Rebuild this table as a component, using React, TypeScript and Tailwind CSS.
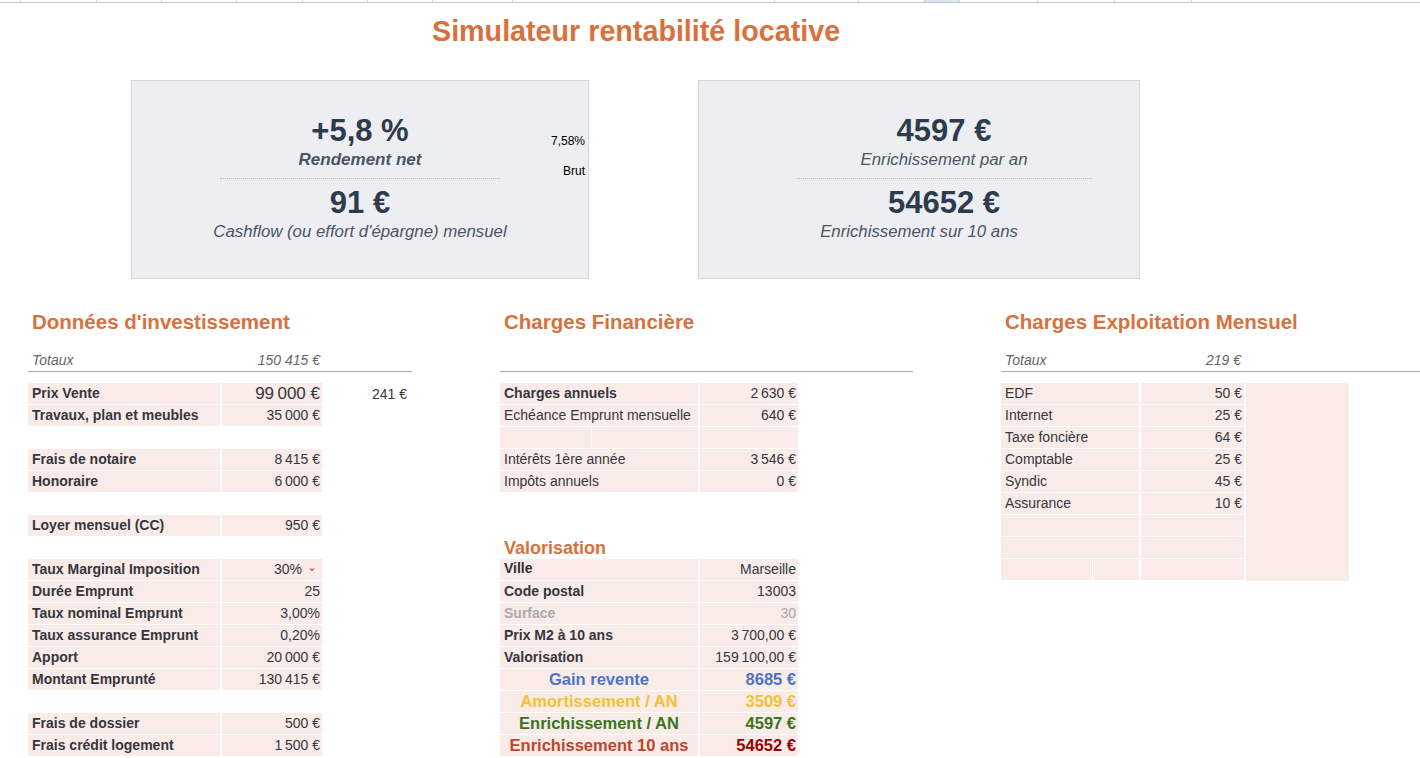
import React from 'react'

type Cell = { label?: string; value?: string; bold?: boolean; big?: boolean; muted?: boolean; split?: boolean; arrow?: boolean }

const pink = 'bg-[#f9ebe7]'

function Row({ row, lw, vw }: { row: Cell; lw: string; vw: string }) {
  if (!row.label && !row.value && !row.split) return <div className="h-[22px]" />
  return (
    <div className="flex h-[22px] border-b border-white">
      <div className={`${lw} ${pink} flex items-center border-r-2 border-white pl-1 ${row.bold ? 'font-bold' : ''} ${row.muted ? 'text-[#aaaaaa]' : 'text-[#34373e]'}`}>
        {row.split ? <div className="h-full w-[88px] border-r border-white" /> : row.label}
      </div>
      <div className={`${vw} ${pink} flex items-center justify-end pr-[2px] ${row.big ? 'text-[17px]' : ''} ${row.muted ? 'text-[#aaaaaa]' : 'text-[#34373e]'}`}>
        {row.value}
        {row.arrow && (
          <svg className="ml-[6px] mr-[4px]" width="8" height="6" viewBox="0 0 8 6">
            <path d="M1 1.5 L7 1.5 L4 4.5 Z" fill="#e0705a" />
          </svg>
        )}
      </div>
    </div>
  )
}

const investissement: Cell[] = [
  { label: 'Prix Vente', value: '99\u202f000 €', bold: true, big: true },
  { label: 'Travaux, plan et meubles', value: '35\u202f000 €', bold: true },
  {},
  { label: 'Frais de notaire', value: '8\u202f415 €', bold: true },
  { label: 'Honoraire', value: '6\u202f000 €', bold: true },
  {},
  { label: 'Loyer mensuel (CC)', value: '950 €', bold: true },
  {},
  { label: 'Taux Marginal Imposition', value: '30%', bold: true, arrow: true },
  { label: 'Durée Emprunt', value: '25', bold: true },
  { label: 'Taux nominal Emprunt', value: '3,00%', bold: true },
  { label: 'Taux assurance Emprunt', value: '0,20%', bold: true },
  { label: 'Apport', value: '20\u202f000 €', bold: true },
  { label: 'Montant Emprunté', value: '130\u202f415 €', bold: true },
  {},
  { label: 'Frais de dossier', value: '500 €', bold: true },
  { label: 'Frais crédit logement', value: '1\u202f500 €', bold: true },
]

const financiere: Cell[] = [
  { label: 'Charges annuels', value: '2\u202f630 €', bold: true },
  { label: 'Echéance Emprunt mensuelle', value: '640 €' },
  { split: true },
  { label: 'Intérêts 1ère année', value: '3\u202f546 €' },
  { label: 'Impôts annuels', value: '0 €' },
]

const valorisation: Cell[] = [
  { label: 'Code postal', value: '13003', bold: true },
  { label: 'Surface', value: '30', bold: true, muted: true },
  { label: 'Prix M2 à 10 ans', value: '3\u202f700,00 €', bold: true },
  { label: 'Valorisation', value: '159\u202f100,00 €', bold: true },
]

const resultats = [
  { label: 'Gain revente', value: '8685 €', color: 'text-[#4a74c9]', vcolor: 'text-[#4a74c9]' },
  { label: 'Amortissement / AN', value: '3509 €', color: 'text-[#f1c232]', vcolor: 'text-[#f1c232]' },
  { label: 'Enrichissement / AN', value: '4597 €', color: 'text-[#38761d]', vcolor: 'text-[#38761d]' },
  { label: 'Enrichissement 10 ans', value: '54652 €', color: 'text-[#c0442b]', vcolor: 'text-[#990000]' },
]

const exploitation: Cell[] = [
  { label: 'EDF', value: '50 €' },
  { label: 'Internet', value: '25 €' },
  { label: 'Taxe foncière', value: '64 €' },
  { label: 'Comptable', value: '25 €' },
  { label: 'Syndic', value: '45 €' },
  { label: 'Assurance', value: '10 €' },
  { label: ' ', value: '' },
  { label: ' ', value: '' },
  { split: true },
]

function SectionHead({ title, total, lw, vw, lineW }: { title: string; total?: string; lw: string; vw: string; lineW: string }) {
  return (
    <div>
      <h2 className="h-[28px] whitespace-nowrap pl-1 text-[20.5px] font-bold leading-[28px] text-[#d9713c]">{title}</h2>
      <div className={`mt-[13px] flex h-[23px] items-center border-b border-[#a8a8a8] italic text-[#666] ${lineW}`}>
        {total && (
          <>
            <div className={`${lw} pl-1`}>Totaux</div>
            <div className={`${vw} pr-[2px] text-right`}>{total}</div>
          </>
        )}
      </div>
    </div>
  )
}

export default function App() {
  return (
    <div className="relative h-[758px] w-[1420px] overflow-hidden bg-white font-['Liberation_Sans',Arial,sans-serif] text-[14px]">
      {/* spreadsheet header edge */}
      <div className="flex h-[3px] border-b border-[#c4c4c4]">
        {[21, 76, 65, 75, 66, 65, 65, 80, 262, 84, 66, 35, 78, 77, 77].map((w, i) => (
          <div key={i} style={{ width: w }} className={`h-full border-r border-[#d4d4d4] ${i === 11 ? 'bg-[#dbe6f3]' : ''}`} />
        ))}
      </div>

      <h1 className="mt-[13px] whitespace-nowrap pl-[432px] text-[28.7px] font-bold leading-[30px] text-[#d9713c]">
        Simulateur rentabilité locative
      </h1>

      <div className="mt-[34px] flex">
        <div className="relative ml-[131px] flex h-[199px] w-[458px] flex-col items-center border border-[#d6d6d6] bg-[#eceef1] pt-[32px] text-[#2e3b4e]">
          <div className="text-[31px] font-bold leading-[36px]">+5,8 %</div>
          <div className="text-[17px] font-bold italic leading-[22px] text-[#4a5566]">Rendement net</div>
          <div className="mt-[7px] w-[280px] border-t border-dotted border-[#b5b8bd]" />
          <div className="mt-[6px] text-[31px] font-bold leading-[36px]">91 €</div>
          <div className="text-[16.8px] italic leading-[22px] text-[#4a5566]">Cashflow (ou effort d'épargne) mensuel</div>
          <div className="absolute right-[3px] top-[51px] text-[12px] text-black">7,58%</div>
          <div className="absolute right-[3px] top-[81px] text-[12px] text-black">Brut</div>
        </div>

        <div className="ml-[109px] flex h-[199px] w-[442px] flex-col items-center border border-[#d6d6d6] bg-[#eceef1] pt-[32px] text-[#2e3b4e]">
          <div className="flex flex-col items-center pl-[50px]">
            <div className="text-[31px] font-bold leading-[36px]">4597 €</div>
            <div className="text-[16.8px] italic leading-[22px] text-[#4a5566]">Enrichissement par an</div>
            <div className="mt-[7px] w-[295px] border-t border-dotted border-[#b5b8bd]" />
            <div className="mt-[6px] text-[31px] font-bold leading-[36px]">54652 €</div>
          </div>
          <div className="text-[16.8px] italic leading-[22px] text-[#4a5566]">Enrichissement sur 10 ans</div>
        </div>
      </div>

      <div className="mt-[29px] flex">
        {/* Données d'investissement */}
        <div className="ml-[28px] w-[384px]">
          <SectionHead title="Données d'investissement" total="150 415 €" lw="w-[194px]" vw="w-[100px]" lineW="w-[384px]" />
          <div className="mt-[11px] flex">
            <div className="w-[294px]">
              {investissement.map((r, i) => (
                <Row key={i} row={r} lw="w-[194px]" vw="w-[100px]" />
              ))}
            </div>
            <div className="ml-[50px] flex h-[22px] items-center whitespace-nowrap text-[#34373e]">241 €</div>
          </div>
        </div>

        {/* Charges Financière */}
        <div className="ml-[88px] w-[413px]">
          <SectionHead title="Charges Financière" lw="w-[200px]" vw="w-[98px]" lineW="w-[413px]" />
          <div className="mt-[11px] w-[298px]">
            {financiere.map((r, i) => (
              <Row key={i} row={r} lw="w-[200px]" vw="w-[98px]" />
            ))}
          </div>
          <h3 className="mt-[44px] h-[22px] pl-1 text-[18px] font-bold leading-[22px] text-[#d9713c]">Valorisation</h3>
          <div className="w-[298px]">
            <div className="flex h-[22px] border-b border-white">
              <div className={`w-[200px] ${pink} border-r-2 border-white pl-1 font-bold leading-[18px] text-[#2f2f2f]`}>Ville</div>
              <div className={`w-[98px] ${pink} flex items-end justify-end pr-[2px] text-[#34373e]`}>Marseille</div>
            </div>
            {valorisation.map((r, i) => (
              <Row key={i} row={r} lw="w-[200px]" vw="w-[98px]" />
            ))}
            {resultats.map((r) => (
              <div key={r.label} className="flex h-[22px] border-b border-white text-[16.5px] font-bold">
                <div className={`w-[200px] ${pink} flex items-center justify-center border-r-2 border-white ${r.color}`}>{r.label}</div>
                <div className={`w-[98px] ${pink} flex items-center justify-end pr-[2px] ${r.vcolor}`}>{r.value}</div>
              </div>
            ))}
          </div>
        </div>

        {/* Charges Exploitation Mensuel */}
        <div className="ml-[88px] w-[419px]">
          <SectionHead title="Charges Exploitation Mensuel" total="219 €" lw="w-[140px]" vw="w-[102px]" lineW="w-[419px]" />
          <div className="mt-[11px] flex">
            <div className="w-[243px]">
              {exploitation.map((r, i) => (
                <Row key={i} row={r} lw="w-[140px]" vw="w-[103px]" />
              ))}
            </div>
            <div className={`ml-[2px] h-[198px] w-[103px] ${pink}`} />
          </div>
        </div>
      </div>
    </div>
  )
}
